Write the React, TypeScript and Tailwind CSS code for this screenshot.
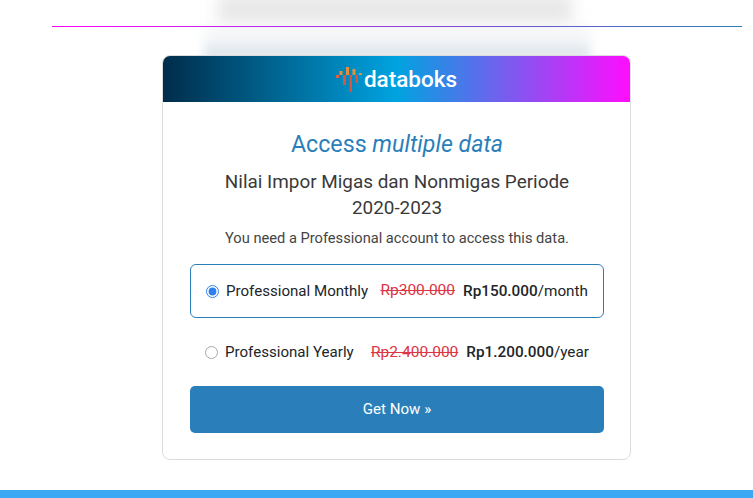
export default function App() {
  return (
    <div className="relative h-[498px] w-[753px] overflow-hidden bg-white font-['Roboto',sans-serif] text-[#343a40]">
      <div className="absolute left-[218px] top-[-6px] h-[30px] w-[354px] bg-[#e8e8e8] blur-[8px]" />
      <div className="absolute left-[204px] top-[26px] h-[18px] w-[386px] bg-[#f5f6f7] blur-[6px]" />
      <div className="absolute left-[204px] top-[43px] h-[20px] w-[386px] bg-[#e3e9ee] blur-[5px]" />
      <div className="relative flex h-full flex-col">
        <div className="ml-[52px] mt-[26px] h-px w-[690px] shrink-0 bg-[linear-gradient(to_right,#ff00ff,#2a7fba)]" />
        <div className="ml-[162px] mt-[28px] flex h-[405px] w-[469px] shrink-0 flex-col overflow-hidden rounded-[8px] border border-[#dcdcdc] bg-white">
          <div className="flex h-[46px] shrink-0 items-center justify-center gap-[2px] bg-[linear-gradient(to_right,#002c4a_0%,#00a3e0_50%,#ff0dff_100%)]">
            <svg width="26" height="25" viewBox="0 0 26 25" className="mt-[1px]">
              <rect x="0" y="8" width="3" height="3" fill="#e0603f" />
              <rect x="3.5" y="4" width="3" height="4" fill="#e0913a" />
              <rect x="7" y="8" width="3" height="10" fill="#d9573f" />
              <rect x="10" y="0" width="3" height="8" fill="#e0913a" />
              <rect x="13.5" y="8" width="2.5" height="17" fill="#d9533f" />
              <rect x="16.5" y="2" width="3" height="6" fill="#e0913a" />
              <rect x="19.5" y="8" width="2.5" height="8" fill="#d9573f" />
              <rect x="23" y="6" width="3" height="2" fill="#e0913a" />
            </svg>
            <span className="text-[22.5px] leading-none font-medium text-white">databoks</span>
          </div>
          <div className="flex flex-1 flex-col pl-[27px] pr-[26px] pt-[28px]">
            <h2 className="text-center text-[23.2px] leading-[28px] text-[#2a7fba]">
              Access <em>multiple data</em>
            </h2>
            <h3 className="mx-auto mt-[11px] w-[370px] text-center text-[18.9px] leading-[26px] font-normal text-[#3a3a3a]">
              Nilai Impor Migas dan Nonmigas Periode 2020-2023
            </h3>
            <p className="mt-[7px] text-center text-[14.65px] leading-[20px] text-[#444]">
              You need a Professional account to access this data.
            </p>
            <div className="mt-[16px] flex h-[54px] items-center rounded-[6px] border border-[#2a7fba] px-[15px] text-[15.1px] text-[#212529]">
              <input type="radio" name="plan" defaultChecked className="m-0 h-[13px] w-[13px] accent-[#2f80ed]" />
              <span className="ml-[7px]">Professional Monthly</span>
              <span className="ml-auto text-[15.5px] text-[#dc3545] line-through">Rp300.000</span>
              <span className="ml-[8px] text-[15.3px]"><b className="font-medium">Rp150.000</b>/month</span>
            </div>
            <div className="mt-[8px] flex h-[53px] items-center px-[15px] text-[15.1px] text-[#212529]">
              <input type="radio" name="plan" className="m-0 h-[13px] w-[13px] appearance-none rounded-full border border-[#a8a8a8]" />
              <span className="ml-[7px]">Professional Yearly</span>
              <span className="ml-auto text-[15.5px] text-[#dc3545] line-through">Rp2.400.000</span>
              <span className="ml-[8px] text-[15.3px]"><b className="font-medium">Rp1.200.000</b>/year</span>
            </div>
            <button className="mt-[7px] h-[47px] w-full rounded-[5px] bg-[#2a7fba] text-center text-[15.1px] text-white">
              Get Now »
            </button>
          </div>
        </div>
        <div className="mt-auto h-[8px] shrink-0 bg-[#3ba8f3]" />
      </div>
    </div>
  );
}
